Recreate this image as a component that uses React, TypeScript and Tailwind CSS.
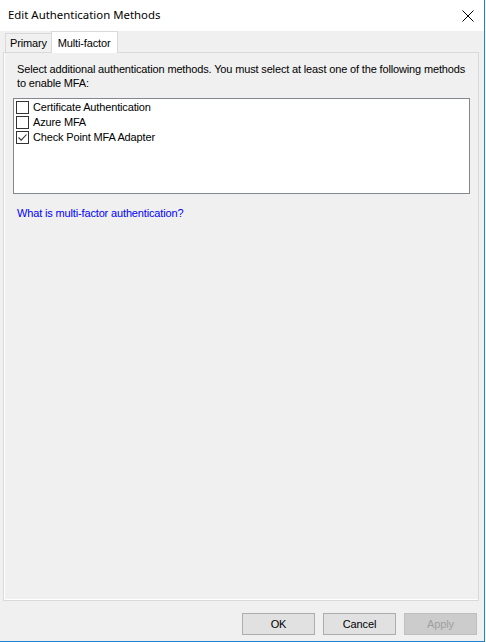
import React from 'react';

const items = [
  { label: 'Certificate Authentication', checked: false },
  { label: 'Azure MFA', checked: false },
  { label: 'Check Point MFA Adapter', checked: true },
];

function CheckBox({ checked }: { checked: boolean }) {
  return (
    <span className="w-[13px] h-[13px] border border-[#333333] bg-white flex items-center justify-center shrink-0">
      {checked && (
        <svg width="11" height="11" viewBox="0 0 11 11">
          <path d="M1.5 5.5 L4.2 8.2 L9.5 2.5" fill="none" stroke="#333333" strokeWidth="1.1" />
        </svg>
      )}
    </span>
  );
}

function Button({ label, disabled }: { label: string; disabled?: boolean }) {
  return (
    <div
      className={
        disabled
          ? 'w-[73px] h-[22px] flex items-center justify-center border border-[#bfbfbf] bg-[#cccccc] text-[#a0a0a0]'
          : 'w-[73px] h-[22px] flex items-center justify-center border border-[#adadad] bg-[#e1e1e1] text-black'
      }
    >
      {label}
    </div>
  );
}

export default function App() {
  return (
    <div className="w-[486px] h-[642px] bg-white overflow-hidden" style={{ fontFamily: '"Liberation Sans", Arial, sans-serif' }}>
      <div className="w-[485px] h-[642px] flex flex-col border-r border-b border-[#1883d7] bg-[#f0f0f0]">
        {/* title bar */}
        <div className="h-[31px] bg-white flex items-center justify-between pl-[8px] pr-[8px] shrink-0">
          <span className="text-[11.4px] text-black -mt-[1px]" style={{ fontFamily: '"Noto Sans", sans-serif' }}>
            Edit Authentication Methods
          </span>
          <svg width="12" height="12" viewBox="0 0 12 12" className="mr-[2px]">
            <path d="M0.5 0.5 L11.5 11.5 M11.5 0.5 L0.5 11.5" stroke="#000" strokeWidth="1" />
          </svg>
        </div>

        <div className="flex-1 flex flex-col px-[3px] text-[11px] tracking-[-0.15px] text-black">
          {/* tabs */}
          <div className="flex items-end h-[22px] pl-[2px] relative z-10">
            <div className="h-[19px] px-[4px] flex items-center border border-b-0 border-[#d9d9d9] bg-[#f0f0f0] mb-[1px]">
              Primary
            </div>
            <div className="h-[22px] pl-[6px] pr-[7px] flex items-start pt-[3px] border border-b-0 border-[#d9d9d9] bg-white -ml-px">
              Multi-factor
            </div>
          </div>

          {/* panel */}
          <div className="h-[549px] -mt-px border border-[#d9d9d9] bg-[#f0f0f0] mr-[2px]">
            <div className="h-full border-l border-b border-white pl-[12px] pr-[4px] pt-[9px]">
              <p className="leading-[14px]">
                Select additional authentication methods. You must select at least one of the following methods to enable MFA:
              </p>
              <div className="mt-[8px] -ml-[4px] mr-[4px] h-[96px] border border-[#828790] bg-white pt-[1px] pl-[2px]">
                {items.map((it) => (
                  <div key={it.label} className="h-[15px] flex items-center gap-[4px]">
                    <CheckBox checked={it.checked} />
                    <span>{it.label}</span>
                  </div>
                ))}
              </div>
              <div className="mt-[11px] text-[#0000ff]">What is multi-factor authentication?</div>
            </div>
          </div>

          {/* buttons */}
          <div className="flex justify-end gap-[8px] pt-[12px] pr-[4px]">
            <Button label="OK" />
            <Button label="Cancel" />
            <Button label="Apply" disabled />
          </div>
        </div>
      </div>
    </div>
  );
}
